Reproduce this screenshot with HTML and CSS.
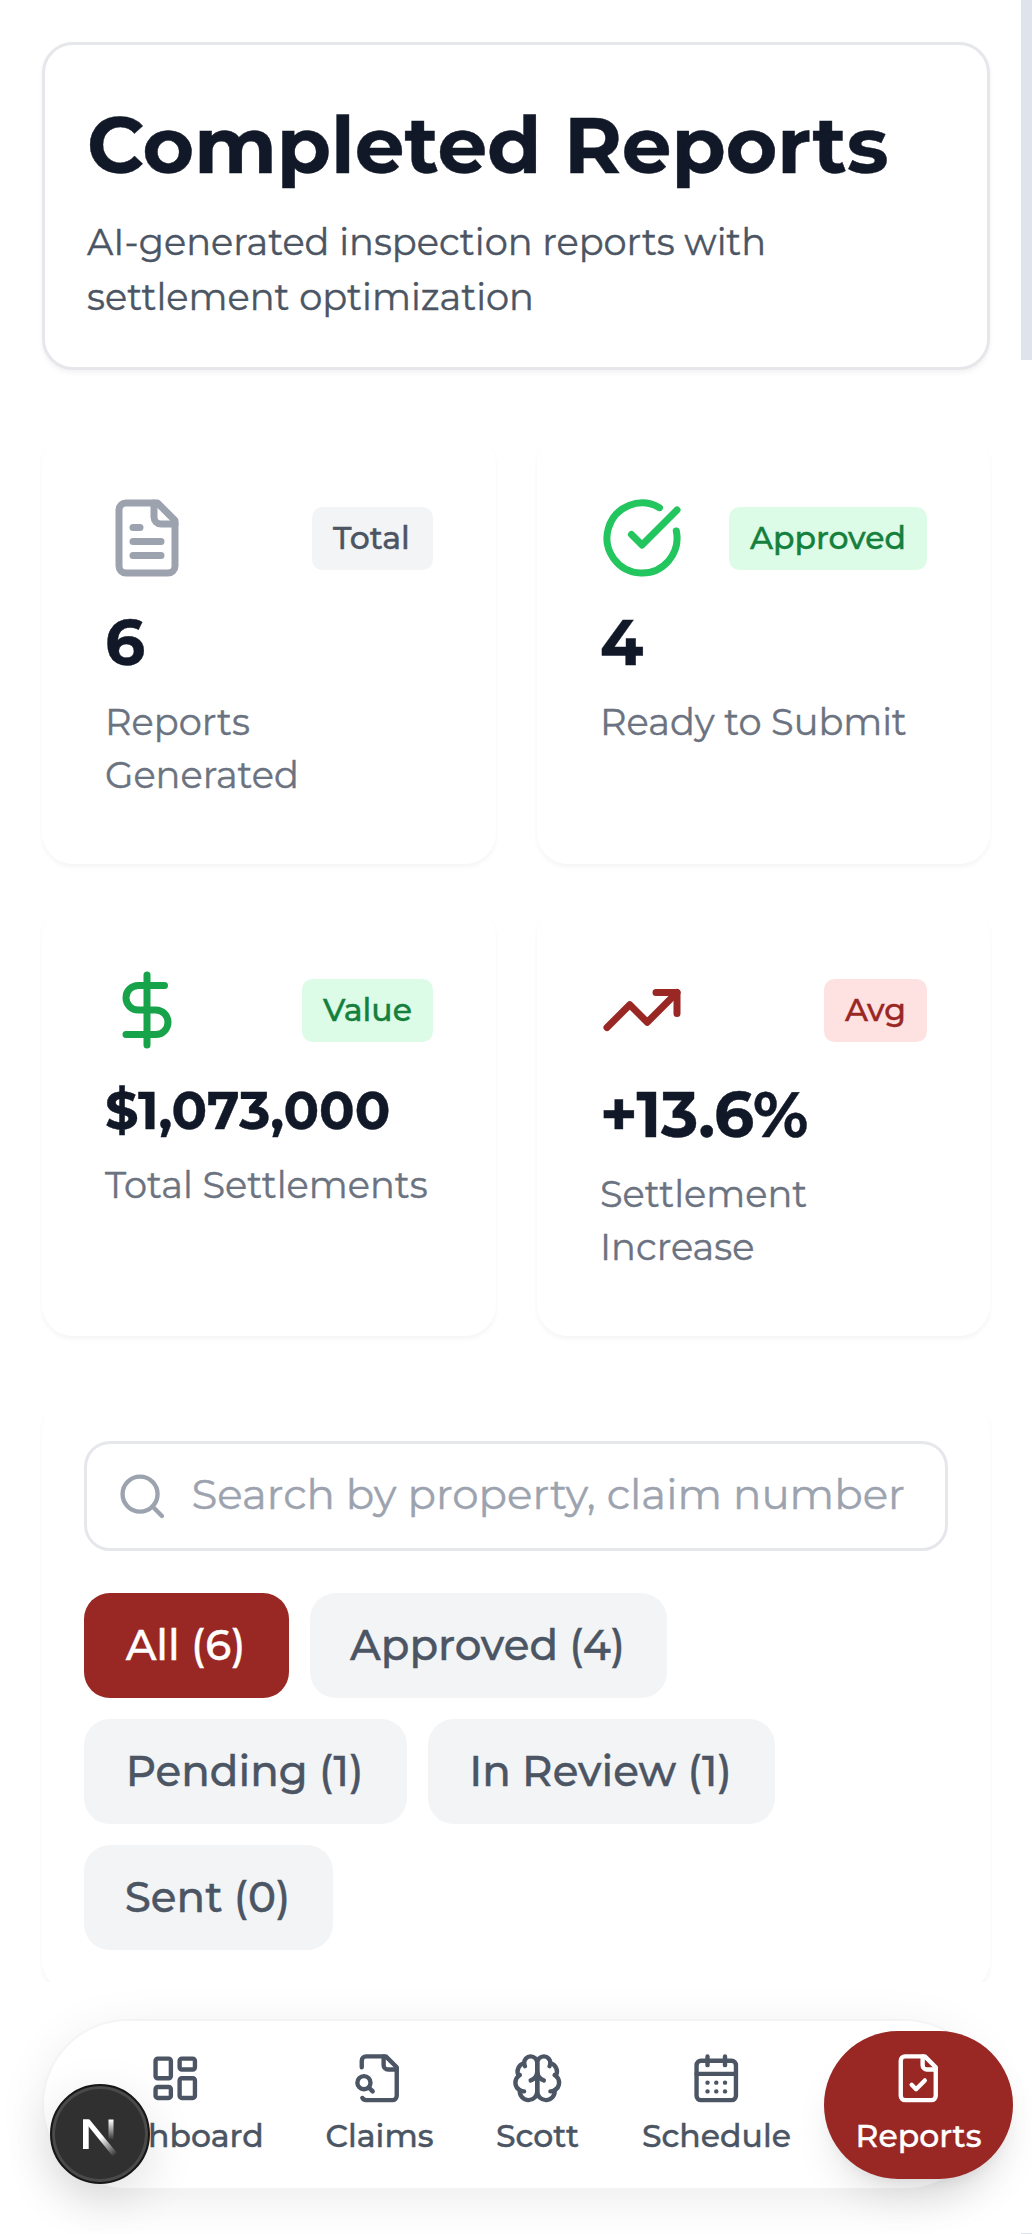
FILE: index.html
```html
<!DOCTYPE html>
<html lang="en">
<head>
<meta charset="utf-8">
<title>Completed Reports</title>
<link rel="stylesheet" href="styles.css">
</head>
<body>
<main class="page">
  <header class="hero">
    <h1 class="hero-title">Completed Reports</h1>
    <p class="hero-sub">AI-generated inspection reports with<br>settlement optimization</p>
  </header>

  <section class="stats">
    <article class="stat">
      <div class="stat-top">
        <svg class="icon gray" viewBox="0 0 24 24"><path d="M15 2H6a2 2 0 0 0-2 2v16a2 2 0 0 0 2 2h12a2 2 0 0 0 2-2V7Z"/><path d="M14 2v4a2 2 0 0 0 2 2h4"/><path d="M10 9H8"/><path d="M16 13H8"/><path d="M16 17H8"/></svg>
        <span class="badge badge-gray badge-total">Total</span>
      </div>
      <div class="value">6</div>
      <div class="label">Reports<br>Generated</div>
    </article>
    <article class="stat">
      <div class="stat-top">
        <svg class="icon green" viewBox="0 0 24 24"><path d="M21.801 10A10 10 0 1 1 17 3.335"/><path d="m9 11 3 3L22 4"/></svg>
        <span class="badge badge-green">Approved</span>
      </div>
      <div class="value">4</div>
      <div class="label">Ready to Submit</div>
    </article>
    <article class="stat">
      <div class="stat-top">
        <svg class="icon green-dark" viewBox="0 0 24 24"><path d="M12 2v20"/><path d="M17 5H9.500a3.500 3.500 0 0 0 0 7h5a3.500 3.500 0 0 1 0 7H6"/></svg>
        <span class="badge badge-green badge-value">Value</span>
      </div>
      <div class="value value-small">$1,073,000</div>
      <div class="label">Total Settlements</div>
    </article>
    <article class="stat">
      <div class="stat-top">
        <svg class="icon red" viewBox="0 0 24 24"><path d="m22 7-8.500 8.500-5-5L2 17"/><path d="M16 7h6v6"/></svg>
        <span class="badge badge-red">Avg</span>
      </div>
      <div class="value">+13.6%</div>
      <div class="label">Settlement<br>Increase</div>
    </article>
  </section>

  <section class="filters">
    <div class="search">
      <svg class="icon-sm" viewBox="0 0 24 24"><circle cx="11" cy="11" r="8"/><path d="m21 21-4.300-4.300"/></svg>
      <span class="placeholder">Search by property, claim number</span>
    </div>
    <div class="chips">
      <button class="chip chip-all active">All (6)</button>
      <button class="chip chip-approved">Approved (4)</button>
      <button class="chip chip-pending">Pending (1)</button>
      <button class="chip chip-review">In Review (1)</button>
      <button class="chip chip-sent">Sent (0)</button>
    </div>
  </section>
</main>

<nav class="nav">
  <a class="tab tab-dashboard">
    <svg class="icon-sm" viewBox="0 0 24 24"><rect width="7" height="9" x="3" y="3" rx="1"/><rect width="7" height="5" x="14" y="3" rx="1"/><rect width="7" height="9" x="14" y="12" rx="1"/><rect width="7" height="5" x="3" y="16" rx="1"/></svg>
    <span>Dashboard</span>
  </a>
  <a class="tab tab-claims">
    <svg class="icon-sm" viewBox="0 0 24 24"><path d="M14 2v4a2 2 0 0 0 2 2h4"/><path d="M4.268 21a2 2 0 0 0 1.727 1H18a2 2 0 0 0 2-2V7l-5-5H6a2 2 0 0 0-2 2v3"/><path d="m9 18-1.500-1.500"/><circle cx="5" cy="14" r="3"/></svg>
    <span>Claims</span>
  </a>
  <a class="tab tab-scott">
    <svg class="icon-sm" viewBox="0 0 24 24"><path d="M12 5a3 3 0 1 0-5.997.125 4 4 0 0 0-2.526 5.770 4 4 0 0 0 .556 6.588A4 4 0 1 0 12 18Z"/><path d="M12 5a3 3 0 1 1 5.997.125 4 4 0 0 1 2.526 5.770 4 4 0 0 1-.556 6.588A4 4 0 1 1 12 18Z"/><path d="M15 13a4.500 4.500 0 0 1-3-4 4.500 4.500 0 0 1-3 4"/><path d="M17.599 6.500a3 3 0 0 0 .399-1.375"/><path d="M6.003 5.125A3 3 0 0 0 6.401 6.500"/><path d="M3.477 10.896a4 4 0 0 1 .585-.396"/><path d="M19.938 10.500a4 4 0 0 1 .585.396"/><path d="M6 18a4 4 0 0 1-1.967-.516"/><path d="M19.967 17.484A4 4 0 0 1 18 18"/></svg>
    <span>Scott</span>
  </a>
  <a class="tab tab-schedule">
    <svg class="icon-sm" viewBox="0 0 24 24"><path d="M8 2v4"/><path d="M16 2v4"/><rect width="18" height="18" x="3" y="4" rx="2"/><path d="M3 10h18"/><path d="M8 14h.01"/><path d="M12 14h.01"/><path d="M16 14h.01"/><path d="M8 18h.01"/><path d="M12 18h.01"/><path d="M16 18h.01"/></svg>
    <span>Schedule</span>
  </a>
  <a class="tab tab-reports active">
    <svg class="icon-sm" viewBox="0 0 24 24"><path d="M15 2H6a2 2 0 0 0-2 2v16a2 2 0 0 0 2 2h12a2 2 0 0 0 2-2V7Z"/><path d="M14 2v4a2 2 0 0 0 2 2h4"/><path d="m9 15 2 2 4-4"/></svg>
    <span>Reports</span>
  </a>
</nav>

<div class="dev-badge">
  <svg viewBox="0 0 100 100">
    <defs>
      <linearGradient id="stem" x1="0" y1="36" x2="0" y2="56" gradientUnits="userSpaceOnUse"><stop offset="0" stop-color="#fff"/><stop offset="1" stop-color="#fff" stop-opacity="0"/></linearGradient>
      <linearGradient id="diag" x1="50" y1="54" x2="65" y2="72" gradientUnits="userSpaceOnUse"><stop offset="0" stop-color="#fff"/><stop offset="1" stop-color="#fff" stop-opacity="0"/></linearGradient>
    </defs>
    <rect x="33" y="35.500" width="5.700" height="29.500" fill="#fff"/>
    <rect x="58.500" y="35.500" width="5" height="20" fill="url(#stem)"/>
    <path d="M33 35.500h6.500L67 69l-4.500 3z" fill="url(#diag)"/>
  </svg>
</div>
<div class="scroll-thumb"></div>
<div class="scroll-corner"></div>
</body>
</html>
```
FILE: styles.css
```css
* { box-sizing: border-box; }
html, body { margin: 0; height: 2234px; overflow: hidden; }
body {
  background: #fff;
  font-family: Montserrat, Inter, "Open Sans", sans-serif;
  color: #111827;
  -webkit-text-stroke: .4px currentColor;
}
svg { display: block; flex: none; fill: none; stroke: currentColor; stroke-width: 2; stroke-linecap: round; stroke-linejoin: round; }
.page { height: 1982px; overflow: hidden; padding: 42px 42px 0; display: flex; flex-direction: column; gap: 63px; }
.page > * { flex: none; }

.hero { height: 328px; padding: 51px 42px; border: 3px solid #e5e7eb; border-radius: 31px; background: #fff; box-shadow: 0 3px 5px rgba(0,0,0,.05); }
.hero-title { margin: 0; font-size: 78.750px; line-height: 98px; font-weight: 700; white-space: nowrap; }
.hero-sub { margin: 20px 0 0; font-size: 36.750px; line-height: 55px; color: #4b5563; white-space: nowrap; }

.stats { display: grid; grid-template-columns: 454px 453px; gap: 41px; }
.stat { height: 431px; padding: 63px; border-radius: 31px; background: #fff; box-shadow: 0 3px 5px rgba(0,0,0,.045); }
.stat-top { display: flex; align-items: center; justify-content: space-between; margin-bottom: 21px; }
.icon { width: 84px; height: 84px; }
.gray { color: #9ca3af; }
.green { color: #22c55e; }
.green-dark { color: #16a34a; }
.red { color: #992724; }
.badge { height: 63px; padding: 0 21px; border-radius: 10.500px; font-size: 31.500px; line-height: 62px; font-weight: 500; white-space: nowrap; }
.badge-gray { background: #f3f4f6; color: #4b5563; }
.badge-green { background: #dcfce7; color: #15803d; }
.badge-red { background: #fee2e2; color: #992724; }
.badge-total { min-width: 121px; }
.badge-value { min-width: 131px; }
.value { font-size: 63px; line-height: 84px; font-weight: 700; white-space: nowrap; }
.value-small { font-size: 52.500px; line-height: 74.500px; }
.label { margin-top: 11px; font-size: 36.750px; line-height: 52.500px; color: #6b7280; white-space: nowrap; }

.filters { height: 593px; padding: 42px; border-radius: 31px; background: #fff; box-shadow: 0 3px 5px rgba(0,0,0,.045); display: flex; flex-direction: column; gap: 42px; }
.search { height: 110px; flex: none; display: flex; align-items: center; gap: 23px; padding: 0 40px 0 29px; border: 3px solid #e5e7eb; border-radius: 26px; color: #9ca3af; }
.icon-sm { width: 52.500px; height: 52.500px; }
.placeholder { margin-bottom: 4px; font-size: 42px; white-space: nowrap; }
.chips { display: flex; flex-wrap: wrap; gap: 21px; }
.chip { height: 105px; padding: 0 2px 2px 0; border: 0; border-radius: 26px; background: #f3f4f6; color: #4b5563; font: 500 42px/102px Montserrat, Inter, "Open Sans", sans-serif; white-space: nowrap; }
.chip.active { background: #992724; color: #fff; }
.chip-all { width: 205px; }
.chip-approved { width: 357px; }
.chip-pending { width: 323px; }
.chip-review { width: 347px; }
.chip-sent { width: 249px; }

.nav { position: absolute; left: 42px; top: 2019px; width: 948px; height: 171px; padding: 10px 0 0 14px; display: flex; border: 2px solid #f3f4f6; border-radius: 86px; background: #fff; box-shadow: 0 10px 50px rgba(0,0,0,.075); color: #4b5563; }
.tab { flex: none; height: 148px; padding-top: 21px; border-radius: 74px; display: flex; flex-direction: column; align-items: center; gap: 10.500px; font-size: 31.500px; line-height: 42px; font-weight: 500; white-space: nowrap; }
.tab.active { background: #992724; color: #fff; box-shadow: 0 26px 39px -8px rgba(0,0,0,.1), 0 10px 16px -10px rgba(0,0,0,.1); }
.tab-dashboard { width: 235px; }
.tab-claims { width: 173px; }
.tab-scott { width: 143px; }
.tab-schedule { width: 215px; }
.tab-reports { width: 189px; }

.dev-badge { position: absolute; left: 50px; top: 2084px; width: 100px; height: 100px; border-radius: 50%; background: #2f302f; border: 2px solid #171717; box-shadow: inset 0 0 0 3px #4a4a4a, 0 15px 50px rgba(0,0,0,.12); }
.dev-badge svg { width: 100px; height: 100px; margin: -2px; stroke: none; }
.scroll-thumb { position: absolute; right: 0; top: 0; width: 11px; height: 360px; background: #dfe3eb; }
.scroll-corner { position: absolute; right: 0; top: 2233px; width: 11px; height: 1px; background: #dfe3eb; }
```
